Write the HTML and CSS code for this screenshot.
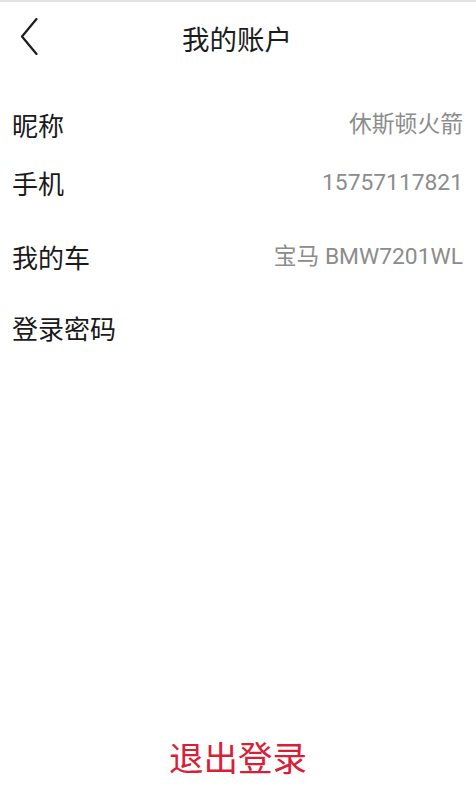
FILE: index.html
```html
<!DOCTYPE html>
<html lang="zh-CN">
<head>
<meta charset="utf-8">
<title>我的账户</title>
<link rel="stylesheet" href="styles.css">
</head>
<body>
<div class="page">
  <header class="topbar">
    <div class="back">
      <svg width="18" height="37" viewBox="0 0 18 37" aria-hidden="true">
        <polyline points="16.5,1 2,18.5 16.5,36" fill="none" stroke="#1c1c1c" stroke-width="2.2" stroke-linecap="round" stroke-linejoin="round"/>
      </svg>
    </div>
    <h1 class="title">我的账户</h1>
    <div class="spacer"></div>
  </header>
  <main class="list">
    <div class="row row-first">
      <span class="label">昵称</span>
      <span class="value">休斯顿火箭</span>
    </div>
    <div class="row row-second">
      <span class="label">手机</span>
      <span class="value">15757117821</span>
    </div>
    <div class="row row-third">
      <span class="label">我的车</span>
      <span class="value">宝马 BMW7201WL</span>
    </div>
    <div class="row">
      <span class="label">登录密码</span>
      <span class="value"></span>
    </div>
  </main>
  <footer class="footer">
    <span class="logout">退出登录</span>
  </footer>
</div>
</body>
</html>
```
FILE: styles.css
```css
html, body {
  margin: 0;
  padding: 0;
  background: #ffffff;
}
body {
  font-family: "Noto Sans CJK SC", "Noto Sans", sans-serif;
  color: #1c1c1c;
}
.page {
  height: 796px;
  display: flex;
  flex-direction: column;
  border-top: 2px solid #e2e2e2;
  box-sizing: border-box;
}
.topbar {
  height: 72px;
  display: grid;
  grid-template-columns: 1fr auto 1fr;
  align-items: center;
}
.back {
  padding-left: 20px;
  height: 37px;
  margin-top: -3px;
}
.back svg {
  display: block;
}
.title {
  margin: 0;
  font-size: 27.5px;
  font-weight: 400;
  line-height: 72px;
  color: #1c1c1c;
  margin-right: 2px;
}
.list {
  flex: 1;
  padding: 31px 13px 0 12px;
}
.row {
  display: flex;
  justify-content: space-between;
  align-items: center;
  height: 40px;
}
.row-first { margin-bottom: 18px; }
.row-second { margin-bottom: 34px; }
.row-third { margin-bottom: 31px; }
.label {
  font-size: 26px;
  line-height: 40px;
  color: #1a1a1a;
}
.value {
  font-family: "Roboto", "Noto Sans CJK SC", sans-serif;
  font-size: 22.8px;
  line-height: 40px;
  color: #8c8c8c;
}
.footer {
  height: 80px;
  display: flex;
  justify-content: center;
  align-items: center;
}
.logout {
  font-size: 34.5px;
  line-height: 80px;
  color: #d81f38;
}
```
